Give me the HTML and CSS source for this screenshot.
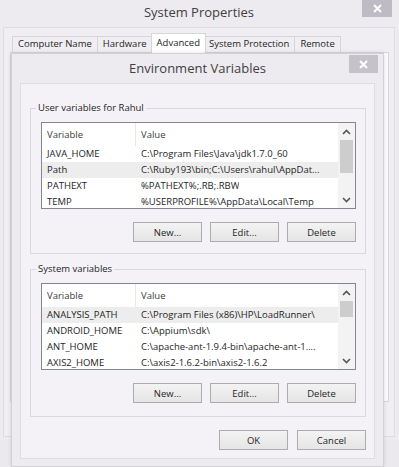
FILE: index.html
```html
<!DOCTYPE html>
<html>
<head>
    <meta http-equiv="Content-Type" content="text/html; charset=utf-8">
    <title>Environment Variables</title>
    <link rel="stylesheet" href="styles.css">
</head>
<body>
    <!-- 背后的 System Properties 窗口 -->
    <div class="win sysprops">
        <div class="titlebar">System Properties</div>
        <div class="close">
            <svg width="9" height="9" viewBox="0 0 9 9"><path d="M1 1L8 8M8 1L1 8" stroke="#fff" stroke-width="2"/></svg>
        </div>
        <div class="win-body">
            <div class="tabs">
                <div class="tab">Computer Name</div>
                <div class="tab">Hardware</div>
                <div class="tab active">Advanced</div>
                <div class="tab">System Protection</div>
                <div class="tab">Remote</div>
            </div>
            <div class="tab-panel"></div>
        </div>
    </div>

    <!-- Environment Variables 对话框 -->
    <div class="win envvars">
        <div class="titlebar">Environment Variables</div>
        <div class="close">
            <svg width="9" height="9" viewBox="0 0 9 9"><path d="M1 1L8 8M8 1L1 8" stroke="#fff" stroke-width="2"/></svg>
        </div>
        <div class="env-body">
            <fieldset class="group">
                <legend>User variables for Rahul</legend>
                <div class="list">
                    <div class="list-main">
                        <div class="list-head"><span class="col-var">Variable</span><span class="col-val">Value</span></div>
                        <div class="row"><span class="col-var">JAVA_HOME</span><span class="col-val">C:\Program Files\Java\jdk1.7.0_60</span></div>
                        <div class="row sel"><span class="col-var">Path</span><span class="col-val">C:\Ruby193\bin;C:\Users\rahul\AppDat...</span></div>
                        <div class="row"><span class="col-var">PATHEXT</span><span class="col-val">%PATHEXT%;.RB;.RBW</span></div>
                        <div class="row"><span class="col-var">TEMP</span><span class="col-val">%USERPROFILE%\AppData\Local\Temp</span></div>
                    </div>
                    <div class="scrollbar">
                        <div class="sb-arrow"><svg width="9" height="6" viewBox="0 0 9 6"><path d="M1 5L4.5 1.5L8 5" fill="none" stroke="#555" stroke-width="1.6"/></svg></div>
                        <div class="sb-track"><div class="sb-thumb thumb-user"></div></div>
                        <div class="sb-arrow"><svg width="9" height="6" viewBox="0 0 9 6"><path d="M1 1L4.5 4.5L8 1" fill="none" stroke="#555" stroke-width="1.6"/></svg></div>
                    </div>
                </div>
                <div class="btn-row">
                    <button>New...</button>
                    <button>Edit...</button>
                    <button>Delete</button>
                </div>
            </fieldset>

            <fieldset class="group">
                <legend>System variables</legend>
                <div class="list">
                    <div class="list-main">
                        <div class="list-head"><span class="col-var">Variable</span><span class="col-val">Value</span></div>
                        <div class="row sel"><span class="col-var">ANALYSIS_PATH</span><span class="col-val">C:\Program Files (x86)\HP\LoadRunner\</span></div>
                        <div class="row"><span class="col-var">ANDROID_HOME</span><span class="col-val">C:\Appium\sdk\</span></div>
                        <div class="row"><span class="col-var">ANT_HOME</span><span class="col-val">C:\apache-ant-1.9.4-bin\apache-ant-1....</span></div>
                        <div class="row"><span class="col-var">AXIS2_HOME</span><span class="col-val">C:\axis2-1.6.2-bin\axis2-1.6.2</span></div>
                    </div>
                    <div class="scrollbar">
                        <div class="sb-arrow"><svg width="9" height="6" viewBox="0 0 9 6"><path d="M1 5L4.5 1.5L8 5" fill="none" stroke="#555" stroke-width="1.6"/></svg></div>
                        <div class="sb-track"><div class="sb-thumb thumb-sys"></div></div>
                        <div class="sb-arrow"><svg width="9" height="6" viewBox="0 0 9 6"><path d="M1 1L4.5 4.5L8 1" fill="none" stroke="#555" stroke-width="1.6"/></svg></div>
                    </div>
                </div>
                <div class="btn-row">
                    <button>New...</button>
                    <button>Edit...</button>
                    <button>Delete</button>
                </div>
            </fieldset>

            <div class="btn-row dialog-btns">
                <button>OK</button>
                <button>Cancel</button>
            </div>
        </div>
    </div>
</body>
</html>
```

FILE: styles.css
```css
body{margin:0;padding:0;}
body{width:399px; height:467px; overflow:hidden; position:relative; background:#ebe8ee;
    font-family:"Open Sans","Liberation Sans",sans-serif; font-size:9.5px; color:#1e1e1e;}

.win{position:absolute; box-sizing:border-box; background:#eeebf0;}
.titlebar{text-align:center; font-size:13px; color:#404040;}
.close{position:absolute; display:flex; align-items:center; justify-content:center;}

/* System Properties */
.sysprops{left:0; top:0; width:399px; height:440px; padding:0 4px 0 3px;}
.sysprops .titlebar{height:27px; line-height:25px;}
.sysprops .close{top:0; right:7px; width:30px; height:17px; background:#bfbbc4;}
.win-body{height:410px; box-sizing:border-box; border:1px solid #dedbe1; padding:5px 5px 0 6px; background:#f0eef2;}
.tabs{display:flex; align-items:flex-end; height:19px; padding-left:2px;}
.tab{height:16px; line-height:13px; padding:0 5px; box-sizing:border-box; border:1px solid #d6d6d6; border-bottom:0;
    background:#f0eef2; white-space:nowrap; margin-left:-1px;}
.tab:first-child{margin-left:0;}
.tab.active{height:20px; line-height:17px; margin:0 -2px -1px -2px; background:#fff; position:relative; z-index:1;}
.tab-panel{height:350px; box-sizing:border-box; border:1px solid #d6d6d6; background:#fbfafc;}

/* Environment Variables */
.envvars{left:11px; top:53px; width:373px; height:414px; border:1px solid #d3d0d6; padding:0 8px 7px;
    display:flex; flex-direction:column; box-shadow:0 0 4px rgba(0,0,0,0.12); z-index:2;}
.envvars .titlebar{height:29px; line-height:29px; flex:none;}
.envvars .close{top:1px; right:5px; width:29px; height:18px; background:#c6c2ca;}
.env-body{flex:1; border:1px solid #dfdce2; background:#f4f2f6; padding:16px 8px 0 9px;}

.group{margin:0; padding:0 9px 11px 10px; border:1px solid #dad7dd; min-width:0;}
.group + .group{margin-top:7px; padding-bottom:13px;}
.group legend{padding:0 2px; margin-left:-5px; line-height:16px;}

.list{margin-top:6px; height:87px; box-sizing:border-box; border:1px solid #828790; background:#fff; display:flex;}
.list-main{flex:1; min-width:0; overflow:hidden;}
.list-head{display:flex; height:23px; line-height:23px; color:#3c3c3c;}
.row{display:flex; height:16px; line-height:16px;}
.row.sel{background:#ededed;}
.col-var{flex:none; width:94px; padding-left:5px; box-sizing:border-box; white-space:nowrap;}
.list-head .col-var{border-right:1px solid #e8e8e8;}
.col-val{padding-left:5px; white-space:nowrap; overflow:hidden;}

.scrollbar{width:17px; flex:none; display:flex; flex-direction:column; background:#f3f3f3;}
.sb-arrow{height:17px; display:flex; align-items:center; justify-content:center;}
.sb-track{flex:1;}
.sb-thumb{margin:0 2px; background:#cdcdcd;}
.thumb-user{height:33px;}
.thumb-sys{height:16px;}

.btn-row{display:flex; justify-content:flex-end; gap:8px; margin-top:13px;}
.dialog-btns{gap:9px;}
button{width:69px; height:20px; padding:0; border:1px solid #acacac; background:linear-gradient(#f3f3f3,#e5e5e5);
    font:inherit; color:#1e1e1e;}
```
